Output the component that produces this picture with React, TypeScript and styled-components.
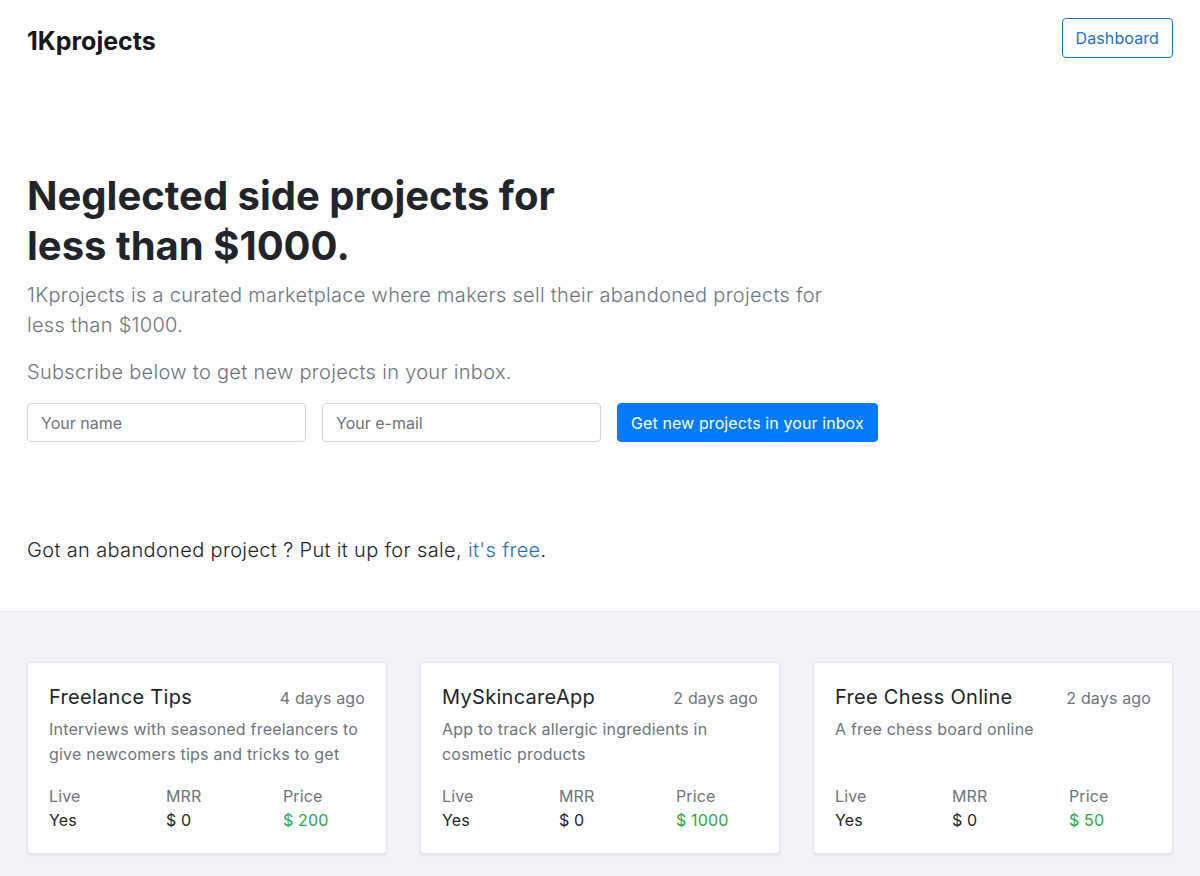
import styled, { createGlobalStyle } from "styled-components";

const GlobalStyle = createGlobalStyle`
  html, body {
    margin: 0;
    padding: 0;
    background: #ffffff;
    color: #212529;
    font-family: Inter, "Noto Sans", "Liberation Sans", sans-serif;
    -webkit-font-smoothing: antialiased;
  }
  * {
    box-sizing: border-box;
  }
`;

type Project = {
  title: string;
  when: string;
  description: string;
  live: string;
  mrr: string;
  price: string;
};

const projects: Project[] = [
  {
    title: "Freelance Tips",
    when: "4 days ago",
    description:
      "Interviews with seasoned freelancers to give newcomers tips and tricks to get started in their freelance career.",
    live: "Yes",
    mrr: "$ 0",
    price: "$ 200",
  },
  {
    title: "MySkincareApp",
    when: "2 days ago",
    description: "App to track allergic ingredients in cosmetic products",
    live: "Yes",
    mrr: "$ 0",
    price: "$ 1000",
  },
  {
    title: "Free Chess Online",
    when: "2 days ago",
    description: "A free chess board online",
    live: "Yes",
    mrr: "$ 0",
    price: "$ 50",
  },
];

export default function App() {
  return (
    <>
      <GlobalStyle />
      <Header>
        <Logo>1Kprojects</Logo>
        <OutlineButton href="#">Dashboard</OutlineButton>
      </Header>

      <Hero>
        <Title>
          Neglected side projects for
          <br />
          less than $1000.
        </Title>
        <Lead>
          1Kprojects is a curated marketplace where makers sell their abandoned projects for
          less than $1000.
        </Lead>
        <Lead $spaced>Subscribe below to get new projects in your inbox.</Lead>
        <SubscribeForm onSubmit={(e) => e.preventDefault()}>
          <TextInput type="text" placeholder="Your name" />
          <TextInput type="email" placeholder="Your e-mail" />
          <PrimaryButton type="submit">Get new projects in your inbox</PrimaryButton>
        </SubscribeForm>
        <SellLine>
          Got an abandoned project ? Put it up for sale, <SellLink href="#">it's free</SellLink>.
        </SellLine>
      </Hero>

      <Listing>
        <CardGrid>
          {projects.map((p) => (
            <Card key={p.title}>
              <CardHead>
                <CardTitle>{p.title}</CardTitle>
                <CardDate>{p.when}</CardDate>
              </CardHead>
              <CardText>{p.description}</CardText>
              <Stats>
                <Stat>
                  <StatLabel>Live</StatLabel>
                  <StatValue>{p.live}</StatValue>
                </Stat>
                <Stat>
                  <StatLabel>MRR</StatLabel>
                  <StatValue>{p.mrr}</StatValue>
                </Stat>
                <Stat>
                  <StatLabel>Price</StatLabel>
                  <StatValue $price>{p.price}</StatValue>
                </Stat>
              </Stats>
            </Card>
          ))}
        </CardGrid>
      </Listing>
    </>
  );
}

const Header = styled.header`
  display: flex;
  align-items: center;
  justify-content: space-between;
  height: 78px;
  padding: 0 27px;
`;

const Logo = styled.div`
  font-size: 25px;
  font-weight: 700;
  color: #16181b;
  margin-top: 3px;
`;

const OutlineButton = styled.a`
  display: inline-flex;
  align-items: center;
  height: 40px;
  padding: 0 13px;
  border: 1px solid #1f74c4;
  border-radius: 4px;
  color: #1f6fbd;
  font-size: 16px;
  letter-spacing: 0.1px;
  text-decoration: none;
  margin-top: -2px;
`;

const Hero = styled.section`
  padding: 93px 27px 0;
  height: 534px;
  border-bottom: 1px solid #e3e6ea;
`;

const Title = styled.h1`
  margin: 0;
  font-size: 40px;
  line-height: 50px;
  font-weight: 700;
  color: #212529;
`;

const Lead = styled.p<{ $spaced?: boolean }>`
  margin: ${({ $spaced }) => ($spaced ? "17px" : "9px")} 0 0;
  max-width: 830px;
  font-size: 20px;
  line-height: 30px;
  font-weight: 300;
  letter-spacing: 0.3px;
  color: #6c757d;
`;

const SubscribeForm = styled.form`
  display: flex;
  gap: 16px;
  margin-top: 16px;
`;

const TextInput = styled.input`
  width: 279px;
  height: 39px;
  padding: 0 13px;
  border: 1px solid #ced4da;
  border-radius: 4px;
  font-family: inherit;
  font-size: 16px;
  color: #495057;

  &::placeholder {
    color: #6c757d;
  }
`;

const PrimaryButton = styled.button`
  height: 39px;
  padding: 0 13px;
  border: 1px solid #007bff;
  border-radius: 4px;
  background: #007bff;
  color: #ffffff;
  font-family: inherit;
  font-size: 16px;
  letter-spacing: 0.1px;
  cursor: pointer;
`;

const SellLine = styled.p`
  margin: 93px 0 0;
  font-size: 20px;
  line-height: 30px;
  font-weight: 300;
  letter-spacing: 0.35px;
  color: #212529;
`;

const SellLink = styled.a`
  color: #1f74c4;
  text-decoration: none;
`;

const Listing = styled.section`
  background: #f1f3f6;
  padding: 50px 27px 40px;
  min-height: 264px;
`;

const CardGrid = styled.div`
  display: grid;
  grid-template-columns: repeat(3, 1fr);
  gap: 33px;
`;

const Card = styled.article`
  background: #ffffff;
  border: 1px solid #e2e5e9;
  border-radius: 3px;
  box-shadow: 0 1px 3px rgba(0, 0, 0, 0.08);
  padding: 21px 21px 21px;
`;

const CardHead = styled.div`
  display: flex;
  justify-content: space-between;
  align-items: baseline;
`;

const CardTitle = styled.h3`
  margin: 0;
  font-size: 20px;
  line-height: 26px;
  font-weight: 400;
  letter-spacing: 0.3px;
  color: #212529;
`;

const CardDate = styled.span`
  font-size: 16px;
  letter-spacing: 0.15px;
  color: #6c757d;
`;

const CardText = styled.p`
  margin: 7px 0 0;
  height: 50px;
  overflow: hidden;
  font-size: 16px;
  line-height: 25px;
  letter-spacing: 0.2px;
  color: #6c757d;
`;

const Stats = styled.div`
  display: grid;
  grid-template-columns: 117px 117px 1fr;
  margin-top: 17px;
`;

const Stat = styled.div`
  display: flex;
  flex-direction: column;
`;

const StatLabel = styled.span`
  font-size: 16px;
  line-height: 24px;
  letter-spacing: 0.15px;
  color: #6c757d;
`;

const StatValue = styled.span<{ $price?: boolean }>`
  font-size: 16px;
  line-height: 24px;
  letter-spacing: 0.15px;
  color: ${({ $price }) => ($price ? "#28a745" : "#212529")};
`;
